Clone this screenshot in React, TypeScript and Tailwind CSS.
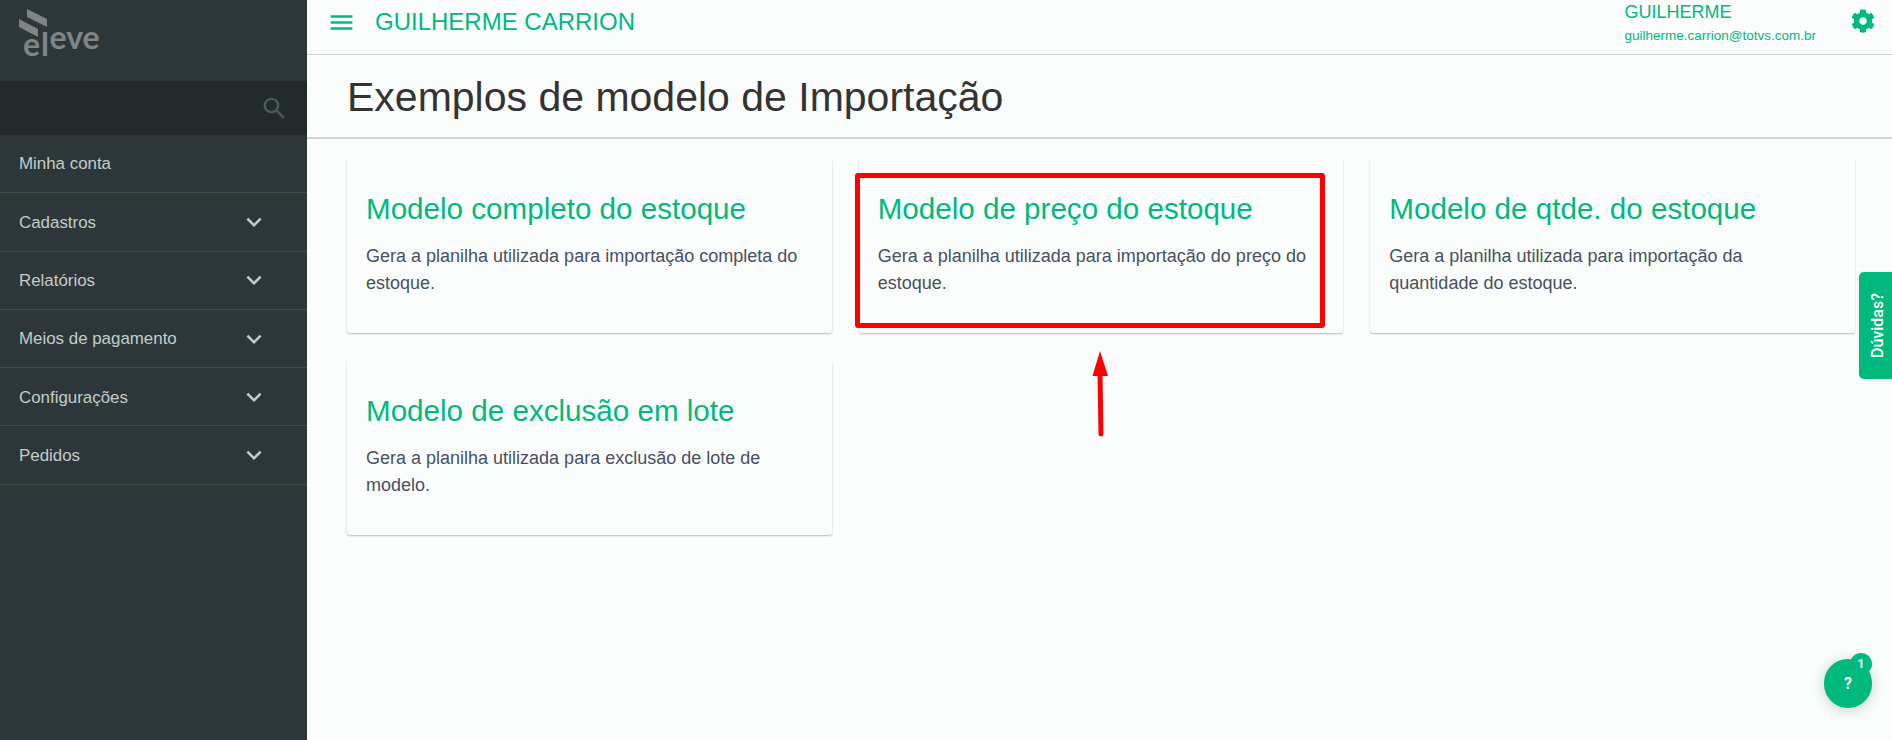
import { FaCog } from 'react-icons/fa';
import { MdExpandMore, MdMenu, MdSearch } from 'react-icons/md';

const menu = [
  { label: 'Minha conta', arrow: false },
  { label: 'Cadastros', arrow: true },
  { label: 'Relatórios', arrow: true },
  { label: 'Meios de pagamento', arrow: true },
  { label: 'Configurações', arrow: true },
  { label: 'Pedidos', arrow: true },
];

const cards = [
  { title: 'Modelo completo do estoque', text: 'Gera a planilha utilizada para importação completa do estoque.' },
  { title: 'Modelo de preço do estoque', text: 'Gera a planilha utilizada para importação do preço do estoque.', marked: true },
  { title: 'Modelo de qtde. do estoque', text: 'Gera a planilha utilizada para importação da\nquantidade do estoque.' },
  { title: 'Modelo de exclusão em lote', text: 'Gera a planilha utilizada para exclusão de lote de modelo.' },
];

const Logo = () => (
  <svg width="110" height="64" viewBox="0 0 110 64" className="block">
    <polygon points="27,9 47,19 47,27 27,17" fill="#7d8587" />
    <polygon points="19,19 38,29 38,37 19,27" fill="#7d8587" />
    <text x="23" y="56" fontFamily="Lato, sans-serif" fontWeight="700" fontSize="32" letterSpacing="1" fill="#7d8587">el</text>
    <text x="49.5" y="49" fontFamily="Lato, sans-serif" fontWeight="700" fontSize="32" fill="#7d8587">eve</text>
  </svg>
);

const Sidebar = () => (
  <aside className="w-[307px] shrink-0 bg-[#2d3739] flex flex-col">
    <div className="h-[81px]">
      <Logo />
    </div>
    <div className="h-[54px] bg-[#222a2b] flex items-center justify-end pr-[18px] text-[#4b5c5e]">
      <MdSearch size={29} />
    </div>
    {menu.map((item) => (
      <div
        key={item.label}
        className="h-[58.3px] flex items-center justify-between pl-[19px] pr-[38px] border-b border-[#454a4a] text-[16.9px] text-[#c3cdcb]"
      >
        <span className="pt-[1px]">{item.label}</span>
        {item.arrow && <MdExpandMore size={30} className="text-[#c3cdcb]" />}
      </div>
    ))}
  </aside>
);

const Header = () => (
  <header className="h-[55px] shrink-0 flex items-center justify-between border-b border-[#d2d4d4] pl-[20px] pr-[17px]">
    <div className="flex items-center gap-[19px] text-[#00b97c]">
      <MdMenu size={29} className="-mt-[10px]" />
      <span className="text-[24px] -mt-[10px]">GUILHERME CARRION</span>
    </div>
    <div className="flex items-center gap-[35px] text-[#00b97c]">
      <div className="flex flex-col -mt-[6px]">
        <span className="text-[18px] leading-[24px]">GUILHERME</span>
        <span className="text-[13.5px] leading-[24px]">guilherme.carrion@totvs.com.br</span>
      </div>
      <FaCog size={24} className="-mt-[12px]" />
    </div>
  </header>
);

const Annotation = () => (
  <>
    <div className="absolute -left-[4px] top-[15px] w-[470px] h-[155px] border-[5px] border-[#ff0000] rounded-[3px]" />
    <svg width="30" height="95" viewBox="0 0 30 95" className="absolute left-[227px] top-[190px]">
      <polygon points="14,3 6.5,28 22,28" fill="#ff0000" />
      <line x1="14" y1="26" x2="15" y2="86" stroke="#ff0000" strokeWidth="5" strokeLinecap="round" />
    </svg>
  </>
);

export default function App() {
  return (
    <div className="w-full h-screen flex overflow-hidden bg-[#fbfdfd] font-['Liberation_Sans',Arial,sans-serif] relative">
      <Sidebar />
      <main className="flex-1 flex flex-col min-w-0">
        <Header />
        <div className="h-[84px] shrink-0 flex items-center pl-[40px] pt-[3px] border-b-2 border-[#d2d4d4]">
          <h1 className="text-[41px] text-[#333333] leading-none">Exemplos de modelo de Importação</h1>
        </div>
        <div className="grid grid-cols-3 gap-x-[27px] gap-y-[27px] pl-[40px] pr-[37px] pt-[19px]">
          {cards.map((card) => (
            <div
              key={card.title}
              className="relative h-[175px] rounded-[3px] bg-[#fbfdfd] px-[19px] pt-[31px] shadow-[0_1px_2px_rgba(0,0,0,0.25)]"
            >
              <h2 className="text-[29.6px] leading-[40px] text-[#00b97c]">{card.title}</h2>
              <p className="mt-[14px] text-[18px] leading-[27px] text-[#485060] whitespace-pre-line">{card.text}</p>
              {card.marked && <Annotation />}
            </div>
          ))}
        </div>
      </main>

      <div className="absolute right-0 top-[272px] w-[33px] h-[107px] bg-[#00b97c] rounded-l-[5px] flex items-center justify-center pl-[4px]">
        <span className="[writing-mode:vertical-rl] rotate-180 text-white text-[16px] font-medium font-['Roboto',sans-serif]">Dúvidas?</span>
      </div>

      <div className="absolute left-[1824px] top-[659px] w-[48px] h-[49px] rounded-full bg-[#00b97c] shadow-[0_2px_14px_rgba(0,0,0,0.2)] flex items-center justify-center text-white text-[16px] font-bold font-['Roboto',sans-serif]">
        ?
        <span className="absolute right-0 -top-[6px] w-[22px] h-[22px] rounded-full bg-[#00b97c] flex items-center justify-center text-[12px]">1</span>
      </div>
    </div>
  );
}
